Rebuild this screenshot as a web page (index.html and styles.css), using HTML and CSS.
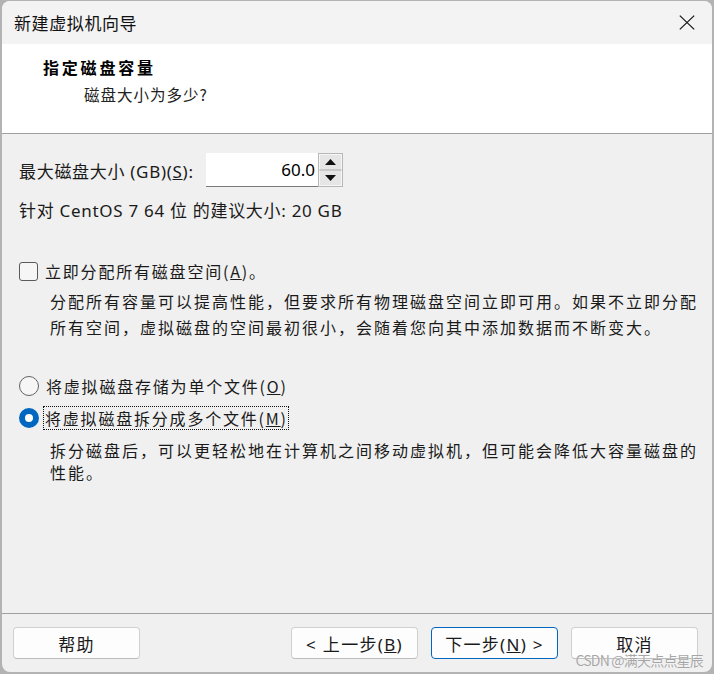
FILE: index.html
```html
<!DOCTYPE html>
<html lang="zh-CN">
<head>
<meta charset="utf-8">
<title>新建虚拟机向导</title>
<link rel="stylesheet" href="styles.css">
</head>
<body>
<div class="window">
  <div class="titlebar">
    <span class="title">新建虚拟机向导</span>
    <svg class="close" width="16" height="15" viewBox="0 0 16 15"><path d="M0.8 0.6 L15.2 14.4 M15.2 0.6 L0.8 14.4" stroke="#1b1b1b" stroke-width="1.3" fill="none"/></svg>
  </div>
  <div class="header">
    <div class="h-title">指定磁盘容量</div>
    <div class="h-sub">磁盘大小为多少?</div>
  </div>
  <div class="content">
    <div class="size-row">
      <span class="size-label">最大磁盘大小 (GB)(<u>S</u>):</span>
      <div class="spin">
        <div class="spin-input">60.0</div>
        <div class="spin-btns">
          <div class="spin-btn"><svg width="11" height="6" viewBox="0 0 11 6"><path d="M5.5 0 L11 6 L0 6 Z" fill="#111"/></svg></div>
          <div class="spin-btn"><svg width="11" height="6" viewBox="0 0 11 6"><path d="M0 0 L11 0 L5.5 6 Z" fill="#111"/></svg></div>
        </div>
      </div>
    </div>
    <div class="recommend">针对 CentOS 7 64 位 的建议大小: 20 GB</div>

    <div class="option check-opt">
      <span class="checkbox"></span>
      <span class="opt-label">立即分配所有磁盘空间(<u>A</u>)。</span>
    </div>
    <div class="desc">分配所有容量可以提高性能，但要求所有物理磁盘空间立即可用。如果不立即分配<br>所有空间，虚拟磁盘的空间最初很小，会随着您向其中添加数据而不断变大。</div>

    <div class="option radio-opt first-radio">
      <span class="radio"></span>
      <span class="opt-label">将虚拟磁盘存储为单个文件(<u>O</u>)</span>
    </div>
    <div class="option radio-opt">
      <span class="radio checked"></span>
      <span class="opt-label focus">将虚拟磁盘拆分成多个文件(<u>M</u>)</span>
    </div>
    <div class="desc desc2">拆分磁盘后，可以更轻松地在计算机之间移动虚拟机，但可能会降低大容量磁盘的<br>性能。</div>
  </div>
  <div class="footer">
    <button class="btn">帮助</button>
    <div class="spacer"></div>
    <button class="btn">&lt; 上一步(<u>B</u>)</button>
    <button class="btn primary">下一步(<u>N</u>) &gt;</button>
    <button class="btn">取消</button>
  </div>
  <div class="watermark">CSDN @满天点点星辰</div>
</div>
</body>
</html>
```
FILE: styles.css
```css
* { box-sizing: border-box; }
html, body { margin: 0; padding: 0; }
body {
  width: 714px;
  height: 674px;
  background: #b3b3b3;
  font-family: "Noto Sans", "Noto Sans CJK SC", sans-serif;
  color: #1a1a1a;
  overflow: hidden;
}
.window {
  position: relative;
  margin: 1px 2px 0 2px;
  height: 671px;
  background: #f0f0f0;
  border-radius: 8px;
  overflow: hidden;
  display: flex;
  flex-direction: column;
}
.titlebar {
  height: 43px;
  background: #f3f3f3;
  display: flex;
  align-items: center;
  justify-content: space-between;
  padding: 0 17px 0 12px;
}
.title {
  font-family: "Noto Sans CJK SC", sans-serif;
  font-size: 17px;
  letter-spacing: 0.6px;
  color: #111;
  margin-top: -1px;
}
.header {
  height: 90px;
  background: #fff;
  border-bottom: 1px solid #a0a0a0;
  padding: 12px 0 0 41px;
  font-family: "Noto Sans CJK SC", sans-serif;
}
.h-title {
  font-size: 16px;
  font-weight: 700;
  letter-spacing: 2.8px;
  line-height: 22px;
  color: #000;
}
.h-sub {
  font-size: 15.5px;
  letter-spacing: 1px;
  line-height: 24px;
  margin-top: 4px;
  margin-left: 41px;
  color: #222;
}
.content {
  flex: 1;
  padding: 19px 16px 0 15px;
  font-size: 17px;
  letter-spacing: 0.7px;
}
.size-row {
  display: flex;
  align-items: center;
  height: 34px;
}
.size-label {
  padding-left: 2px;
  width: 189px;
  white-space: nowrap;
}
.spin {
  display: flex;
  height: 34px;
}
.spin-input {
  width: 112px;
  background: #fff;
  border-bottom: 1px solid #7a7a7a;
  text-align: right;
  padding-right: 3px;
  font-size: 17px;
  letter-spacing: 0;
  line-height: 33px;
  color: #000;
}
.spin-btns {
  display: flex;
  flex-direction: column;
  width: 25px;
  border: 1px solid #b8b8b8;
  background: #e6e6e6;
}
.spin-btn {
  flex: 1;
  display: flex;
  align-items: center;
  justify-content: center;
  border: 1px solid #f6f6f6;
  border-bottom-color: #c8c8c8;
}
.spin-btn + .spin-btn { border-top-color: #c8c8c8; border-bottom-color: #f6f6f6; }
.recommend {
  margin-top: 12px;
  line-height: 24px;
  padding-left: 2px;
  white-space: nowrap;
}
.option {
  display: flex;
  align-items: center;
  height: 24px;
  letter-spacing: 0;
}
.check-opt { margin-top: 36px; }
.opt-label {
  font-family: "Noto Sans CJK SC", sans-serif;
  font-size: 16px;
  letter-spacing: 1.8px;
  margin-left: 7px;
  line-height: 22px;
  color: #1a1a1a;
  white-space: nowrap;
}
.checkbox {
  width: 19px;
  height: 19px;
  border: 1px solid #5a5a5a;
  border-radius: 3px;
  background: #f6f6f6;
  margin-left: 2px;
  flex: none;
}
.radio {
  width: 20px;
  height: 20px;
  border: 1px solid #626262;
  border-radius: 50%;
  background: #f6f6f6;
  margin-left: 2px;
  flex: none;
}
.radio.checked {
  border: 6.5px solid #0067c0;
  background: #fff;
}
.focus {
  outline: 1px dotted #111;
  outline-offset: 0;
  margin-left: 5px;
  padding-left: 1px;
}
.desc {
  font-family: "Noto Sans CJK SC", sans-serif;
  font-size: 16px;
  letter-spacing: 2px;
  line-height: 26px;
  margin: 5px 0 0 33px;
  color: #1a1a1a;
  white-space: nowrap;
}
.first-radio { margin-top: 34px; }
.radio-opt + .radio-opt { margin-top: 8px; }
.desc2 { margin-top: 9px; line-height: 22px; }
.footer {
  border-top: 1px solid #a0a0a0;
  padding: 13px 14px 13px 11px;
  display: flex;
  gap: 13px;
}
.spacer { flex: 1; }
.btn {
  width: 127px;
  height: 32px;
  background: #fdfdfd;
  border: 1px solid #d0d0d0;
  border-bottom-color: #bdbdbd;
  border-radius: 4px;
  font-family: "Noto Sans", "Noto Sans CJK SC", sans-serif;
  font-size: 17px;
  color: #1a1a1a;
  letter-spacing: 1.3px;
  padding: 0;
}
.btn.primary { border: 1px solid #0067c0; }
.watermark {
  position: absolute;
  right: 9px;
  bottom: 2px;
  font-family: "Noto Sans CJK SC", sans-serif;
  font-size: 14px;
  color: rgba(150,150,150,0.85);
  letter-spacing: -0.8px;
  text-shadow: 0 0 1px #fff;
}
```
